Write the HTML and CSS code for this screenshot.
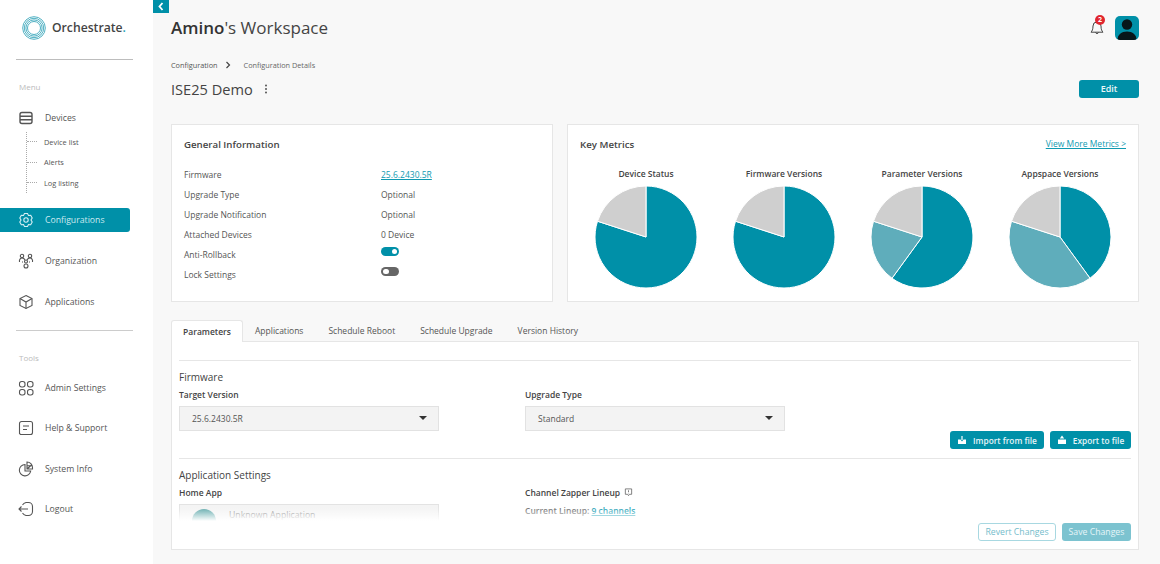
FILE: index.html
```html
<!DOCTYPE html>
<html lang="en">
<head>
<meta charset="utf-8">
<title>Orchestrate</title>
<link rel="stylesheet" href="styles.css">
</head>
<body>
<div class="app">
  <aside class="sidebar">
    <div class="logo">
      <svg class="logo-mark" viewBox="0 0 24 24" width="24" height="24"><circle cx="12" cy="12" r="11.3"/><circle cx="12" cy="12" r="9.7"/><circle cx="12" cy="12" r="8.1"/><circle cx="12" cy="12" r="6.5"/></svg>
      <span class="logo-text">Orchestrate<span class="logo-dot">.</span></span>
    </div>
    <div class="side-label label-menu">Menu</div>
    <a class="nav-item nav-devices"><svg class="ico ico-bold" viewBox="0 0 16 16"><rect x="2" y="2.500" width="12" height="11" rx="2"/><path d="M2 6.200h12M2 9.800h12"/></svg><span>Devices</span></a>
    <ul class="sub">
      <li>Device list</li>
      <li>Alerts</li>
      <li>Log listing</li>
    </ul>
    <a class="nav-item active"><svg class="ico" viewBox="0 0 16 16"><path d="M6.500 1.500h3l1 2 2.200-.200 1.500 2.700-1.200 2 1.200 2-1.500 2.700-2.200-.200-1 2h-3l-1-2-2.200.200-1.500-2.700 1.200-2-1.200-2 1.500-2.700 2.200.200z"/><circle cx="8" cy="8" r="2.200"/></svg><span>Configurations</span></a>
    <a class="nav-item after-active"><svg class="ico" viewBox="0 0 16 16"><circle cx="4" cy="3" r="1.700"/><circle cx="12" cy="3" r="1.700"/><circle cx="8" cy="13" r="2"/><path d="M1.500 9c-.500-2.500 1-4 2.500-4s2.500.8 3 2M14.500 9c.500-2.500-1-4-2.500-4s-2.500.8-3 2"/><circle cx="8" cy="8.500" r="1.500"/><path d="M4 9h1M12 9h-1"/></svg><span>Organization</span></a>
    <a class="nav-item"><svg class="ico" viewBox="0 0 16 16"><path d="M8 1.500l6 3v7l-6 3-6-3v-7z"/><path d="M2 4.500l6 3.500 6-3.500M8 8v6.500"/></svg><span>Applications</span></a>
    <div class="side-rule"></div>
    <div class="side-label label-tools">Tools</div>
    <a class="nav-item"><svg class="ico" viewBox="0 0 16 16"><rect x="1.500" y="1.500" width="5.500" height="5.500" rx="2.200"/><rect x="9.500" y="1.500" width="5.500" height="5.500" rx="2.200"/><rect x="1.500" y="9.500" width="5.500" height="5.500" rx="2.200"/><rect x="9.500" y="9.500" width="5.500" height="5.500" rx="2.200"/></svg><span>Admin Settings</span></a>
    <a class="nav-item"><svg class="ico" viewBox="0 0 16 16"><path d="M3.500 1.500h9a2 2 0 0 1 2 2v9a2 2 0 0 1-2 2h-10l-1-1v-10a2 2 0 0 1 2-2z"/><path d="M5 6h6M5 9.500h4"/></svg><span>Help &amp; Support</span></a>
    <a class="nav-item"><svg class="ico" viewBox="0 0 16 16"><path d="M7 3.500A5.700 5.700 0 1 0 12.700 10H7z"/><path d="M9 1a5.500 5.500 0 0 1 5.500 5.500V8H9zM9 4.700h5.200M9 8l4.500-4"/></svg><span>System Info</span></a>
    <a class="nav-item"><svg class="ico" viewBox="0 0 16 16"><path d="M4.500 4A6.500 6.500 0 0 1 8 1.500h2.500a4 4 0 0 1 4 4v5a4 4 0 0 1-4 4H8A6.500 6.500 0 0 1 4.500 12"/><path d="M10 8H1M3.500 5.500L1 8l2.500 2.500"/></svg><span>Logout</span></a>
  </aside>

  <main class="main">
    <button class="collapse" type="button"><svg viewBox="0 0 16 13" width="16" height="13"><path d="M9.500 3L6.500 6.500l3 3.500"/></svg></button>

    <header class="topbar">
      <h1 class="workspace"><b>Amino</b>'s Workspace</h1>
      <div class="top-actions">
        <div class="bell">
          <svg viewBox="0 0 16 16" width="16" height="16"><path d="M8 2a4 4 0 0 1 4 4c0 3.500.8 4.800 2 6.200H2C3.200 10.800 4 9.500 4 6a4 4 0 0 1 4-4z"/><path d="M6.500 12.500a1.600 1.600 0 0 0 3 0"/></svg>
          <span class="badge">2</span>
        </div>
        <div class="avatar"><svg viewBox="0 0 24 24" width="24" height="24"><circle cx="12" cy="8.500" r="5.200"/><path d="M2.500 24c0-5.500 4-8.500 9.500-8.500s9.500 3 9.500 8.500z"/></svg></div>
      </div>
    </header>

    <nav class="crumbs"><span class="crumb-first">Configuration</span><svg viewBox="0 0 6 8" width="6" height="8"><path d="M1.500 1l3 3-3 3"/></svg><span>Configuration Details</span></nav>

    <div class="title-row">
      <h2 class="page-title">ISE25 Demo</h2>
      <svg class="kebab" viewBox="0 0 4 10" width="4" height="10"><circle cx="2" cy="1.500" r="1"/><circle cx="2" cy="5" r="1"/><circle cx="2" cy="8.500" r="1"/></svg>
      <button class="btn edit" type="button">Edit</button>
    </div>

    <section class="cards">
      <div class="card info">
        <h3>General Information</h3>
        <dl class="rows">
          <div class="row"><dt>Firmware</dt><dd><a class="link">25.6.2430.5R</a></dd></div>
          <div class="row"><dt>Upgrade Type</dt><dd>Optional</dd></div>
          <div class="row"><dt>Upgrade Notification</dt><dd>Optional</dd></div>
          <div class="row"><dt>Attached Devices</dt><dd>0 Device</dd></div>
          <div class="row"><dt>Anti-Rollback</dt><dd><span class="toggle on"></span></dd></div>
          <div class="row"><dt>Lock Settings</dt><dd><span class="toggle"></span></dd></div>
        </dl>
      </div>
      <div class="card metrics">
        <div class="metrics-head"><h3>Key Metrics</h3><a class="link">View More Metrics &gt;</a></div>
        <div class="pies">
          <figure class="pie"><figcaption>Device Status</figcaption><svg viewBox="0 0 104 104" width="104" height="104"><path class="s1" d="M52 52V1A51 51 0 1 1 3.500 36.240Z"/><path class="s3" d="M52 52L3.500 36.240A51 51 0 0 1 52 1Z"/></svg></figure>
          <figure class="pie"><figcaption>Firmware Versions</figcaption><svg viewBox="0 0 104 104" width="104" height="104"><path class="s1" d="M52 52V1A51 51 0 1 1 3.500 36.240Z"/><path class="s3" d="M52 52L3.500 36.240A51 51 0 0 1 52 1Z"/></svg></figure>
          <figure class="pie"><figcaption>Parameter Versions</figcaption><svg viewBox="0 0 104 104" width="104" height="104"><path class="s1" d="M52 52V1A51 51 0 1 1 22 93.260Z"/><path class="s2" d="M52 52L22 93.260A51 51 0 0 1 3.500 36.240Z"/><path class="s3" d="M52 52L3.500 36.240A51 51 0 0 1 52 1Z"/></svg></figure>
          <figure class="pie"><figcaption>Appspace Versions</figcaption><svg viewBox="0 0 104 104" width="104" height="104"><path class="s1" d="M52 52V1A51 51 0 0 1 82 93.260Z"/><path class="s2" d="M52 52L82 93.260A51 51 0 0 1 3.500 36.240Z"/><path class="s3" d="M52 52L3.500 36.240A51 51 0 0 1 52 1Z"/></svg></figure>
        </div>
      </div>
    </section>

    <div class="tabs">
      <span class="tab current">Parameters</span>
      <span class="tab">Applications</span>
      <span class="tab">Schedule Reboot</span>
      <span class="tab">Schedule Upgrade</span>
      <span class="tab">Version History</span>
    </div>

    <section class="panel">
      <div class="block firmware">
        <h4>Firmware</h4>
        <div class="fields">
          <div class="field"><label>Target Version</label><div class="select"><span>25.6.2430.5R</span><i class="caret"></i></div></div>
          <div class="field"><label>Upgrade Type</label><div class="select"><span>Standard</span><i class="caret"></i></div></div>
        </div>
        <div class="file-actions">
          <button class="btn file" type="button"><svg viewBox="0 0 10 10" width="10" height="10"><path d="M1 4.500h2.500L5 6.500l1.500-2H9v4.500H1z"/><path d="M4.400 1h1.200v4H4.400z"/></svg>Import from file</button>
          <button class="btn file" type="button"><svg viewBox="0 0 10 10" width="10" height="10"><path d="M1 4.500h8v4.500H1z"/><path d="M5 .5L7.200 3.500H2.800z"/></svg>Export to file</button>
        </div>
      </div>
      <div class="block apps">
        <h4>Application Settings</h4>
        <div class="fields">
          <div class="field"><label>Home App</label><div class="select app-select"><span class="app-dot"></span><span class="app-name">Unknown Application</span><i class="caret app-caret"></i></div></div>
          <div class="field">
            <label>Channel Zapper Lineup <svg class="hint" viewBox="0 0 10 10" width="9" height="9"><path d="M1.500 1h7v6H6L5 8.500 4 7H1.500z"/><path d="M5 2.500v2M5 5.300v.6"/></svg></label>
            <p class="lineup">Current Lineup: <a class="link">9 channels</a></p>
          </div>
        </div>
      </div>
      <div class="fade"></div>
      <div class="panel-actions">
        <button class="btn ghost" type="button">Revert Changes</button>
        <button class="btn save" type="button">Save Changes</button>
      </div>
    </section>
  </main>
</div>
</body>
</html>
```

FILE: styles.css
```css
* { box-sizing: border-box; }
html, body { margin: 0; height: 100%; }
body { font-family: "Open Sans", "Liberation Sans", sans-serif; color: #555; background: #f8f8f8; overflow: hidden; }
h1, h2, h3, h4, p, dl, dd, dt, ul, figure { margin: 0; padding: 0; }
button { font-family: inherit; border: 0; padding: 0; }

.app { display: flex; width: 1160px; height: 564px; overflow: hidden; }

/* sidebar */
.sidebar { width: 153px; flex: none; background: #fff; display: flex; flex-direction: column; }
.logo { height: 60px; margin: 0 20px 0 16px; border-bottom: 1px solid #bdbdbd; display: flex; align-items: center; gap: 6px; padding: 0 0 4px 6px; }
.logo-mark { fill: none; stroke: #3ba7bb; stroke-width: .9; flex: none; }
.logo-text { font-size: 12.200px; font-weight: 600; color: #444; }
.logo-dot { color: #2aa3b8; }
.side-label { font-size: 8px; line-height: 12px; color: #bbb; padding-left: 19px; }
.label-menu { margin-top: 21px; }
.label-tools { margin-top: 21px; }
.nav-item { height: 24px; display: flex; align-items: center; gap: 11px; padding-left: 18px; font-size: 8.700px; color: #555; margin-top: 16.500px; width: 130px; }
.nav-devices { margin-top: 12.500px; }
.label-tools + .nav-item { margin-top: 12px; }
.ico { width: 16px; height: 16px; fill: none; stroke: #555; stroke-width: 1.100; flex: none; }
.ico-bold { stroke-width: 1.400; }
.active { background: #0090a8; color: #cdeaf0; border-radius: 0 3px 3px 0; }
.active .ico { stroke: #d6eff4; }
.sub { list-style: none; margin: 2px 0 0 26px; border-left: 1px dotted #aaa; }
.sub li { height: 20.500px; display: flex; align-items: center; font-size: 7.400px; color: #555; }
.sub li::before { content: ""; width: 10px; border-top: 1px dotted #aaa; margin-right: 7px; }
.sub + .nav-item { margin-top: 14.500px; }
.nav-item.after-active { margin-top: 17.500px; }
.side-rule { height: 1px; background: #ccc; margin: 16px 20px 0 16px; }

/* main */
.main { flex: 1; min-width: 0; padding: 0 21px 0 18px; position: relative; }
.collapse { position: absolute; left: 0; top: 0; width: 16px; height: 13px; background: #0090a8; display: block; }
.collapse svg { display: block; fill: none; stroke: #fff; stroke-width: 1.800; }
.topbar { display: flex; justify-content: space-between; align-items: center; height: 40px; padding-top: 16px; }
.workspace { font-size: 17px; font-weight: 400; color: #444; line-height: 26px; }
.workspace b { font-weight: 600; color: #333; }
.top-actions { display: flex; align-items: center; gap: 10px; }
.bell { position: relative; width: 16px; height: 16px; }
.bell svg { fill: none; stroke: #444; stroke-width: 1; display: block; }
.badge { position: absolute; left: 6px; top: -5px; width: 10px; height: 10px; border-radius: 50%; background: #e0262e; color: #fff; font-size: 7px; font-weight: 700; line-height: 10px; text-align: center; }
.avatar { width: 24px; height: 24px; border-radius: 5px; background: #0090a8; overflow: hidden; }
.avatar svg { display: block; fill: #07161a; }
.crumbs { display: flex; align-items: center; font-size: 7.300px; color: #666; line-height: 12px; margin-top: 18.500px; }
.crumb-first { color: #555; }
.crumbs svg { fill: none; stroke: #444; stroke-width: 1.200; margin: 0 13px 0 7px; }
.title-row { display: flex; align-items: center; height: 18px; margin-top: 9px; }
.page-title { font-size: 14.600px; font-weight: 400; color: #444; line-height: 18px; }
.kebab { fill: #555; margin-left: 11px; }
.btn { display: inline-flex; align-items: center; justify-content: center; border-radius: 3px; font-size: 9px; }
.edit { margin-left: auto; width: 60px; height: 18px; background: #0090a8; color: #eaf7f9; font-weight: 600; }

.cards { display: flex; gap: 14px; margin-top: 26.500px; height: 178px; }
.card { background: #fff; border: 1px solid #e6e6e6; padding: 11.500px 12px 12px; }
.card h3 { font-size: 9.700px; font-weight: 600; color: #444; line-height: 15px; }
.info { width: 382px; flex: none; }
.rows { margin-top: 12.500px; }
.row { display: flex; height: 20px; align-items: center; font-size: 8.500px; color: #555; }
.row dt { width: 197px; flex: none; }
.link { color: #0f9ab1; text-decoration: underline; }
.toggle { display: block; width: 18px; height: 8.500px; border-radius: 5px; background: #666; position: relative; margin-top: -5px; }
.toggle::after { content: ""; position: absolute; left: 2px; top: 1.500px; width: 5.500px; height: 5.500px; border-radius: 50%; background: #fff; }
.toggle.on { background: #0090a8; }
.toggle.on::after { left: auto; right: 2px; }
.metrics { flex: 1; min-width: 0; padding: 11.500px 0 0; }
.metrics-head { display: flex; justify-content: space-between; align-items: flex-start; padding: 0 12px; }
.metrics-head .link { font-size: 8.500px; line-height: 13px; }
.pies { display: flex; margin-top: 16px; padding: 0 9px; }
.pie { width: 138px; flex: none; display: flex; flex-direction: column; align-items: center; }
.pie figcaption { font-size: 8.500px; font-weight: 600; color: #444; line-height: 12px; }
.pie svg { display: block; margin-top: 5px; }
.pie path { stroke: #fff; stroke-width: 1; }
.s1 { fill: #0090a8; }
.s2 { fill: #5fadbb; }
.s3 { fill: #cfcfcf; }

/* tabs */
.tabs { display: flex; gap: 25px; margin-top: 18px; height: 22px; position: relative; z-index: 1; }
.tab { height: 22px; line-height: 22px; font-size: 8.500px; color: #555; }
.tab.current { background: #fff; border: 1px solid #e6e6e6; border-bottom: 0; border-radius: 3px 3px 0 0; font-weight: 600; color: #444; width: 72px; margin-right: -13px; text-align: center; }
.panel { background: #fff; border: 1px solid #e6e6e6; height: 209px; padding: 18px 7px 0; position: relative; overflow: hidden; margin-top: -1px; }
.block { border-top: 1px solid #e6e6e6; }
.firmware { height: 98px; position: relative; }
.block h4 { font-size: 10px; font-weight: 400; color: #444; line-height: 14px; margin-top: 9px; }
.fields { display: flex; gap: 86px; margin-top: 5px; }
.field { width: 260px; }
.field label { display: block; font-size: 8.500px; font-weight: 600; color: #444; line-height: 12px; }
.select { height: 25px; margin-top: 5px; background: #f3f3f3; border: 1px solid #e2e2e2; display: flex; align-items: center; justify-content: space-between; padding: 0 11px 1px 12px; font-size: 8.500px; color: #555; }
.caret { width: 0; height: 0; border-left: 4px solid transparent; border-right: 4px solid transparent; border-top: 4px solid #333; }
.file-actions { display: flex; justify-content: flex-end; gap: 6px; }
.file { height: 18px; background: #0090a8; color: #e6f5f8; gap: 6px; font-weight: 600; font-size: 8.300px; }
.file:first-child { width: 94px; }
.file:last-child { width: 81px; }
.file svg { fill: #fff; }
.app-select { justify-content: flex-start; gap: 13px; color: #888; height: 30px; align-items: flex-start; padding-top: 4px; }
.app-dot { width: 24px; height: 24px; border-radius: 50%; background: #5aa6a8; flex: none; }
.app-name { font-size: 8.700px; }
.app-caret { margin: 12px 0 0 auto; }
.hint { fill: none; stroke: #666; stroke-width: .9; margin-left: 2px; vertical-align: -1px; }
.lineup { font-size: 8.500px; color: #666; font-weight: 600; margin-top: 6px; line-height: 12px; }
.fade { position: absolute; left: 0; right: 0; bottom: 0; height: 46px; background: linear-gradient(to bottom, rgba(255,255,255,0) 0, rgba(255,255,255,.15) 6px, rgba(255,255,255,1) 18px); }
.panel-actions { position: absolute; right: 7px; bottom: 8px; display: flex; gap: 6px; }
.ghost { width: 78px; height: 18px; background: #fff; border: 1px solid #a8d8e1; color: #74bccb; font-size: 8.700px; }
.save { width: 69px; height: 18px; background: #7cc3d0; color: #e6f5f8; font-size: 8.700px; }
```
